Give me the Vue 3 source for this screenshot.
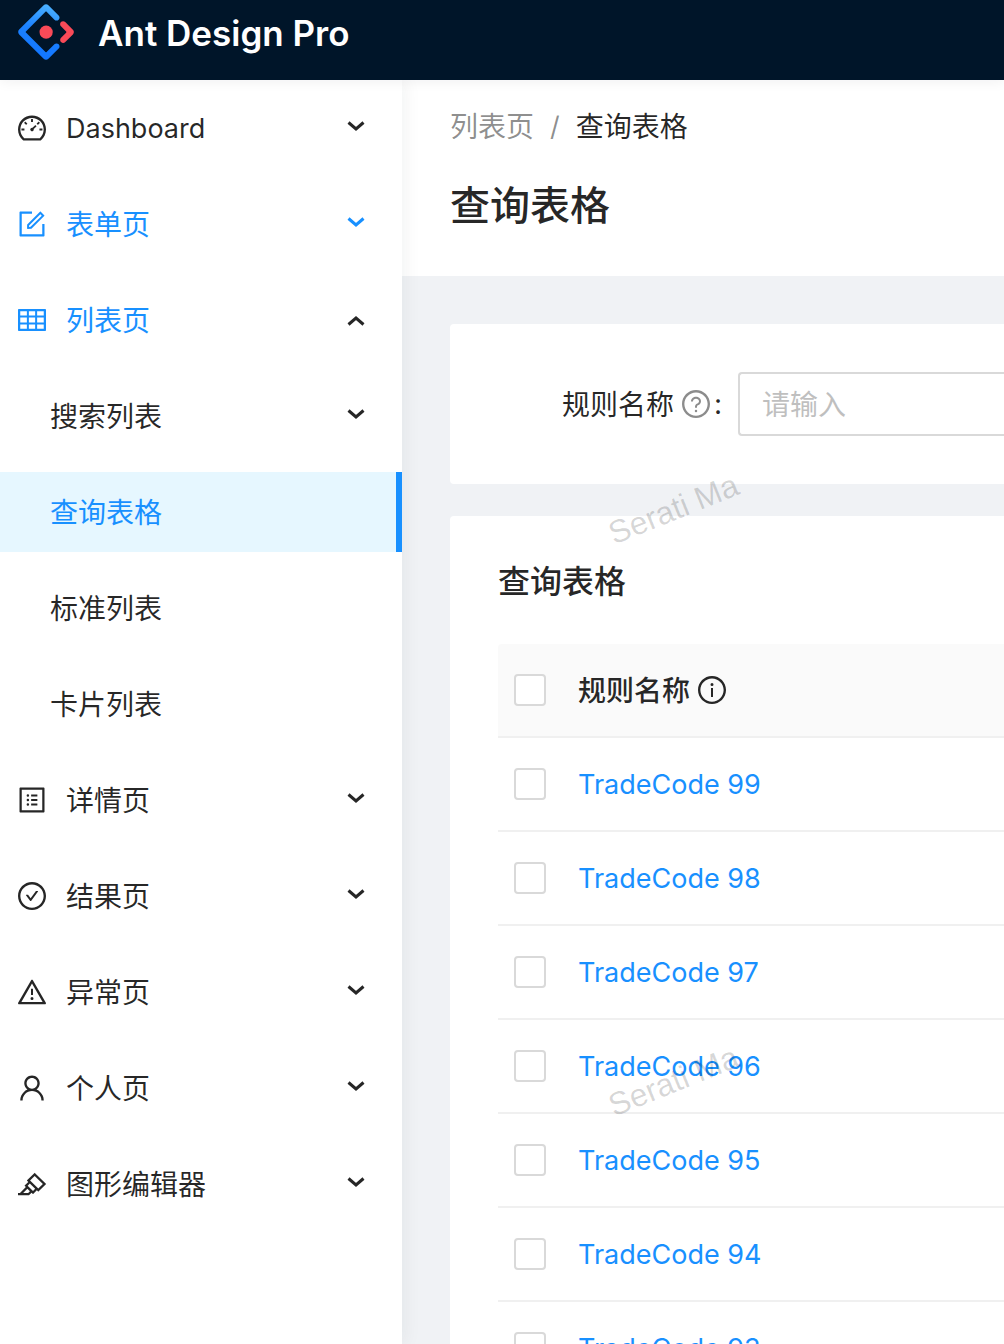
<script setup>
import { ref } from 'vue'

const ring = 'M512 64C264.6 64 64 264.6 64 512s200.6 448 448 448 448-200.6 448-448S759.4 64 512 64zm0 820c-205.4 0-372-166.6-372-372s166.6-372 372-372 372 166.6 372 372-166.6 372-372 372z'

const icons = {
  dashboard: 'M924.8 385.6a446.7 446.7 0 00-96-142.4 446.7 446.7 0 00-142.4-96C631.1 123.8 572.5 112 512 112s-119.1 11.8-174.4 35.2a446.7 446.7 0 00-142.4 96 446.7 446.7 0 00-96 142.4C75.8 440.9 64 499.5 64 560c0 132.7 58.3 257.7 159.9 343.1l1.7 1.4c5.8 4.8 13.1 7.5 20.6 7.5h531.7c7.5 0 14.8-2.7 20.6-7.5l1.7-1.4C901.7 817.7 960 692.7 960 560c0-60.5-11.9-119.1-35.2-174.4zM761.4 836H262.6A371.12 371.12 0 01140 560c0-99.4 38.7-192.8 109-263 70.3-70.3 163.7-109 263-109 99.4 0 192.8 38.7 263 109 70.3 70.3 109 163.7 109 263 0 105.6-44.5 205.5-122.6 276zM623.5 421.5a8.03 8.03 0 00-11.3 0L527.7 506c-18.7-5-39.4-.2-54.1 14.5a55.95 55.95 0 000 79.2 55.95 55.95 0 0079.2 0 55.87 55.87 0 0014.5-54.1l84.5-84.5c3.1-3.1 3.1-8.2 0-11.3l-28.3-28.3zM490 320h44c4.4 0 8-3.6 8-8v-80c0-4.4-3.6-8-8-8h-44c-4.4 0-8 3.6-8 8v80c0 4.4 3.6 8 8 8zm260 218v44c0 4.4 3.6 8 8 8h80c4.4 0 8-3.6 8-8v-44c0-4.4-3.6-8-8-8h-80c-4.4 0-8 3.6-8 8zm12.7-197.2l-31.1-31.1a8.03 8.03 0 00-11.3 0l-56.6 56.6a8.03 8.03 0 000 11.3l31.1 31.1c3.1 3.1 8.2 3.1 11.3 0l56.6-56.6c3.1-3.1 3.1-8.2 0-11.3zm-458.6-31.1a8.03 8.03 0 00-11.3 0l-31.1 31.1a8.03 8.03 0 000 11.3l56.6 56.6c3.1 3.1 8.2 3.1 11.3 0l31.1-31.1c3.1-3.1 3.1-8.2 0-11.3l-56.6-56.6zM262 530h-80c-4.4 0-8 3.6-8 8v44c0 4.4 3.6 8 8 8h80c4.4 0 8-3.6 8-8v-44c0-4.4-3.6-8-8-8z',
  form: 'M904 512h-56c-4.4 0-8 3.6-8 8v320H184V184h320c4.4 0 8-3.6 8-8v-56c0-4.4-3.6-8-8-8H144c-17.7 0-32 14.3-32 32v736c0 17.7 14.3 32 32 32h736c17.7 0 32-14.3 32-32V520c0-4.4-3.6-8-8-8zM355.9 534.9L354 653.8c-.1 8.9 7.1 16.2 16 16.2h.4l118-2.9c2-.1 4-.9 5.4-2.3l415.9-415c3.1-3.1 3.1-8.2 0-11.3L785.4 114.3c-1.6-1.6-3.6-2.3-5.7-2.3s-4.1.8-5.7 2.3l-415.8 415a8.3 8.3 0 00-2.3 5.6zm63.5 23.6L779.7 199l45.2 45.1-360.5 359.7-45.7 1.1.7-46.4z',
  table: 'M928 160H96c-17.7 0-32 14.3-32 32v640c0 17.7 14.3 32 32 32h832c17.7 0 32-14.3 32-32V192c0-17.7-14.3-32-32-32zm-40 208H676V232h212v136zm0 224H676V432h212v160zM412 432h200v160H412V432zm200-64H412V232h200v136zm-476 64h212v160H136V432zm0-200h212v136H136V232zm0 424h212v136H136V656zm276 0h200v136H412V656zm476 136H676V656h212v136z',
  profile: 'M880 112H144c-17.7 0-32 14.3-32 32v736c0 17.7 14.3 32 32 32h736c17.7 0 32-14.3 32-32V144c0-17.7-14.3-32-32-32zm-40 728H184V184h656v656zM492 400h184c4.4 0 8-3.6 8-8v-48c0-4.4-3.6-8-8-8H492c-4.4 0-8 3.6-8 8v48c0 4.4 3.6 8 8 8zm0 144h184c4.4 0 8-3.6 8-8v-48c0-4.4-3.6-8-8-8H492c-4.4 0-8 3.6-8 8v48c0 4.4 3.6 8 8 8zm0 144h184c4.4 0 8-3.6 8-8v-48c0-4.4-3.6-8-8-8H492c-4.4 0-8 3.6-8 8v48c0 4.4 3.6 8 8 8zM340 368a40 40 0 1080 0 40 40 0 10-80 0zm0 144a40 40 0 1080 0 40 40 0 10-80 0zm0 144a40 40 0 1080 0 40 40 0 10-80 0z',
  check: 'M699 353h-46.9c-10.2 0-19.9 4.9-25.9 13.3L469 584.3l-71.2-98.8c-6-8.3-15.6-13.3-25.9-13.3H325c-6.5 0-10.3 7.4-6.5 12.7l124.6 172.8a31.8 31.8 0 0051.7 0l210.6-292c3.9-5.3.1-12.7-6.4-12.7z' + ring,
  warning: 'M464 720a48 48 0 1096 0 48 48 0 10-96 0zm16-304v184c0 4.4 3.6 8 8 8h48c4.4 0 8-3.6 8-8V416c0-4.4-3.6-8-8-8h-48c-4.4 0-8 3.6-8 8zm475.7 440l-416-720c-6.2-10.7-16.9-16-27.7-16s-21.6 5.3-27.7 16l-416 720C56 877.4 71.4 904 96 904h832c24.6 0 40-26.6 27.7-48zm-783.5-27.9L512 239.9l339.8 588.2H172.2z',
  user: 'M858.5 763.6a374 374 0 00-80.6-119.5 375.63 375.63 0 00-119.5-80.6c-.4-.2-.8-.3-1.2-.5C719.5 518 760 444.7 760 362c0-137-111-248-248-248S264 225 264 362c0 82.7 40.5 156 102.8 201.1-.4.2-.8.3-1.2.5-44.8 18.9-85 46-119.5 80.6a375.63 375.63 0 00-80.6 119.5A371.7 371.7 0 00136 901.8a8 8 0 008 8.2h60c4.4 0 7.9-3.5 8-7.8 2-77.2 33-149.5 87.8-204.3 56.7-56.7 132-87.9 212.2-87.9s155.5 31.2 212.2 87.9C779 752.7 810 825 812 902.2c.1 4.4 3.6 7.8 8 7.8h60a8 8 0 008-8.2c-1-47.8-10.9-94.3-29.5-138.2zM512 534c-45.9 0-89.1-17.9-121.6-50.4S340 407.9 340 362c0-45.9 17.9-89.1 50.4-121.6S466.1 190 512 190s89.1 17.9 121.6 50.4S684 316.1 684 362c0 45.9-17.9 89.1-50.4 121.6S557.9 534 512 534z',
  highlight: 'M957.6 507.4L603.2 158.2a7.9 7.9 0 00-11.2 0L353.3 393.4a8.03 8.03 0 00-.1 11.3l.1.1 40 39.4-117.2 115.3a8.03 8.03 0 00-.1 11.3l.1.1 39.5 38.9-189.1 187H72.1c-4.4 0-8.1 3.6-8.1 8V860c0 4.4 3.6 8 8 8h344.9c2.1 0 4.1-.8 5.6-2.3l76.1-75.6 40.4 39.8a7.9 7.9 0 0011.2 0l117.1-115.6 40.1 39.5a7.9 7.9 0 0011.2 0l238.7-235.2c3.4-3 3.4-8 .3-11.2zM389.8 796.2H229.6l134.4-133 80.1 78.9-54.3 54.1zm154.8-62.1L373.2 565.2l68.6-67.6 171.4 168.9-68.6 67.6zM713.1 658L450.3 399.1 597.6 254l262.8 259-147.3 145z',
  question: 'M623.6 316.7C593.6 290.4 554 276 512 276s-81.6 14.5-111.6 40.7C369.2 344 352 380.7 352 420v7.6c0 4.4 3.6 8 8 8h48c4.4 0 8-3.6 8-8V420c0-44.1 43.1-80 96-80s96 35.9 96 80c0 31.1-22 59.6-56.1 72.7-21.2 8.1-39.2 22.3-52.1 40.9-13.1 19-19.9 41.8-19.9 64.9V620c0 4.4 3.6 8 8 8h48c4.4 0 8-3.6 8-8v-22.7a48.3 48.3 0 0130.9-44.8c59-22.7 97.1-74.7 97.1-132.5.1-39.3-17.1-76-48.3-103.3zM472 732a40 40 0 1080 0 40 40 0 10-80 0z' + ring,
  info: 'M464 336a48 48 0 1096 0 48 48 0 10-96 0zm72 112h-48c-4.4 0-8 3.6-8 8v272c0 4.4 3.6 8 8 8h48c4.4 0 8-3.6 8-8V456c0-4.4-3.6-8-8-8z' + ring
}

const menu = [
  { label: 'Dashboard', icon: 'dashboard', latin: true },
  { label: '表单页', icon: 'form', highlighted: true },
  {
    label: '列表页',
    icon: 'table',
    active: true,
    children: [
      { label: '搜索列表', group: true },
      { label: '查询表格', selected: true },
      { label: '标准列表' },
      { label: '卡片列表' }
    ]
  },
  { label: '详情页', icon: 'profile' },
  { label: '结果页', icon: 'check' },
  { label: '异常页', icon: 'warning' },
  { label: '个人页', icon: 'user' },
  { label: '图形编辑器', icon: 'highlight' }
]

const open = ref('列表页')
const toggle = (label) => {
  open.value = open.value === label ? '' : label
}

const ruleName = ref('')
const checked = ref([])
const rows = Array.from({ length: 7 }, (_, i) => `TradeCode ${99 - i}`)
const toggleAll = (event) => {
  checked.value = event.target.checked ? [...rows] : []
}
</script>

<template>
  <div class="layout">
    <header class="topbar">
      <a class="brand" href="#">
        <svg class="logo" viewBox="0 0 200 200" aria-hidden="true">
          <defs>
            <linearGradient id="logo-blue" x1="0.6" y1="0" x2="0.4" y2="0.9">
              <stop offset="0" stop-color="#4ab0ff" />
              <stop offset="0.5" stop-color="#1c82ff" />
              <stop offset="1" stop-color="#1276ff" />
            </linearGradient>
          </defs>
          <path
            fill="url(#logo-blue)"
            d="M91.6 4.2L4.2 91.5c-4.7 4.7-4.7 12.3 0 17l87.4 87.3c4.7 4.7 12.3 4.7 17 0l36.6-36.6c4.2-4.2 4.2-11 0-15.2s-11-4.2-15.2 0l-27.8 27.7c-1.2 1.2-2.9 1.2-4.1 0L28.3 102c-1.2-1.2-1.2-3 0-4.1l69.8-69.8c1.2-1.2 2.9-1.2 4.1 0L130 55.9c4.2 4.2 11 4.2 15.2 0s4.2-11 0-15.2L108.6 4.1c-4.7-4.6-12.3-4.6-17 .1z"
          />
          <path
            fill="#f94a58"
            d="M153.700 135.900c4.200 4.200 11 4.200 15.200 0l27.100-27c4.700-4.700 4.700-12.300 0-17l-27.300-27.200c-4.200-4.200-11-4.200-15.200 0s-4.200 11 0 15.200l18.400 18.400c1.200 1.200 1.200 2.900 0 4.100l-18.200 18.200c-4.200 4.300-4.200 11.100 0 15.300z"
          />
          <circle fill="#f94a58" cx="100.500" cy="100.400" r="23.600" />
        </svg>
        <span class="brand-name">Ant Design Pro</span>
      </a>
    </header>

    <div class="body">
      <nav class="sidebar" aria-label="主菜单">
        <ul class="menu">
          <li v-for="item in menu" :key="item.label">
            <button
              type="button"
              class="menu-item"
              :class="{ highlighted: item.highlighted, active: item.active }"
              :aria-expanded="open === item.label"
              @click="toggle(item.label)"
            >
              <svg class="icon" viewBox="64 64 896 896" aria-hidden="true">
                <path :d="icons[item.icon]" />
              </svg>
              <span class="menu-label" :class="{ latin: item.latin }">{{ item.label }}</span>
              <svg class="arrow" :class="{ up: open === item.label }" viewBox="0 0 20 12" aria-hidden="true">
                <path d="M2.500 2.500L10 9l7.500-6.500" />
              </svg>
            </button>

            <ul v-if="item.children && open === item.label" class="submenu">
              <li v-for="child in item.children" :key="child.label">
                <button v-if="child.group" type="button" class="menu-item nested">
                  <span class="menu-label">{{ child.label }}</span>
                  <svg class="arrow" viewBox="0 0 20 12" aria-hidden="true">
                    <path d="M2.500 2.500L10 9l7.500-6.500" />
                  </svg>
                </button>
                <a v-else href="#" class="menu-item nested" :class="{ selected: child.selected }">
                  <span class="menu-label">{{ child.label }}</span>
                </a>
              </li>
            </ul>
          </li>
        </ul>
      </nav>

      <main class="content">
        <section class="page-header">
          <nav class="breadcrumb" aria-label="面包屑">
            <a href="#">列表页</a>
            <span class="latin">/</span>
            <span class="current">查询表格</span>
          </nav>
          <h1 class="page-title">查询表格</h1>
        </section>

        <div class="cards">
          <form class="card search" @submit.prevent>
            <label class="search-label" for="rule-name">
              <span class="label-text">规则名称</span>
              <svg class="icon muted" viewBox="64 64 896 896" aria-hidden="true">
                <path :d="icons.question" />
              </svg>
              <span class="colon">:</span>
            </label>
            <input id="rule-name" v-model="ruleName" class="search-input" type="text" placeholder="请输入" />
          </form>

          <section class="card list">
            <h2 class="list-title">查询表格</h2>
            <table class="table">
              <thead>
                <tr>
                  <th class="pick">
                    <input
                      type="checkbox"
                      class="checkbox"
                      aria-label="全选"
                      :checked="checked.length === rows.length"
                      @change="toggleAll"
                    />
                  </th>
                  <th>
                    <span class="column-title">
                      <span class="label-text">规则名称</span>
                      <svg class="icon" viewBox="64 64 896 896" aria-hidden="true">
                        <path :d="icons.info" />
                      </svg>
                    </span>
                  </th>
                </tr>
              </thead>
              <tbody>
                <tr v-for="row in rows" :key="row">
                  <td class="pick">
                    <input v-model="checked" type="checkbox" class="checkbox" :value="row" :aria-label="row" />
                  </td>
                  <td><a class="row-link latin" href="#">{{ row }}</a></td>
                </tr>
              </tbody>
            </table>
          </section>
        </div>

        <div class="watermarks" aria-hidden="true">
          <span v-for="n in 2" :key="n" class="watermark">Serati Ma</span>
        </div>
      </main>
    </div>
  </div>
</template>

<style>
body {
  margin: 0;
}
</style>

<style scoped>
.layout {
  --text: rgba(0, 0, 0, 0.85);
  --primary: #1890ff;
  display: flex;
  flex-direction: column;
  height: 100vh;
  overflow: hidden;
  background: #f0f2f5;
  color: var(--text);
  font-family: Inter, 'Noto Sans CJK SC', sans-serif;
  font-size: 28px;
  line-height: 44px;
}

a {
  color: inherit;
  text-decoration: none;
}

ul {
  margin: 0;
  padding: 0;
  list-style: none;
}

button,
input {
  font: inherit;
  color: inherit;
}

.latin {
  font-size: 27px;
}

.icon {
  flex: none;
  width: 28px;
  height: 28px;
  fill: currentColor;
}

.topbar {
  position: relative;
  z-index: 3;
  flex: none;
  height: 80px;
  background: #001529;
  box-shadow: 0 2px 12px rgba(0, 21, 41, 0.06);
}

.brand {
  display: flex;
  align-items: center;
  gap: 24px;
  height: 64px;
  padding-left: 18px;
}

.logo {
  width: 56px;
  height: 56px;
}

.brand-name {
  padding-top: 2px;
  color: #fff;
  font-size: 35px;
  font-weight: 600;
}

.body {
  display: flex;
  flex: 1;
  min-height: 0;
}

.sidebar {
  position: relative;
  z-index: 2;
  flex: 0 0 402px;
  background: #fff;
  box-shadow: 4px 0 16px rgba(29, 35, 41, 0.05);
}

.menu {
  display: flex;
  flex-direction: column;
  gap: 16px;
  padding: 8px 0;
}

.submenu {
  display: flex;
  flex-direction: column;
  gap: 16px;
  margin-top: 16px;
}

.menu-item {
  box-sizing: border-box;
  display: flex;
  align-items: center;
  gap: 20px;
  width: 100%;
  height: 80px;
  padding: 0 36px 0 18px;
  border: 0;
  background: none;
  text-align: left;
  cursor: pointer;
}

.menu-item.nested {
  padding-left: 50px;
}

.menu-label {
  flex: 1;
  padding-top: 2px;
}

.label-text {
  padding-top: 2px;
}

.menu-item.highlighted,
.menu-item.active {
  color: var(--primary);
}

.menu-item.selected {
  border-right: 6px solid var(--primary);
  background: #e6f7ff;
  color: var(--primary);
}

.arrow {
  width: 20px;
  height: 12px;
  margin-bottom: 4px;
  fill: none;
  stroke: currentColor;
  stroke-width: 3;
}

.arrow.up {
  margin: 2px 0 0;
  color: var(--text);
  transform: rotate(180deg);
}

.content {
  position: relative;
  flex: 1;
  min-width: 0;
  overflow-y: auto;
  scrollbar-width: none;
}

.page-header {
  padding: 25px 48px 38px;
  background: #fff;
}

.breadcrumb {
  display: flex;
  gap: 16px;
  color: rgba(0, 0, 0, 0.45);
}

.current {
  color: var(--text);
}

.page-title {
  margin: 25px 0 0;
  font-size: 40px;
  font-weight: 500;
  line-height: 64px;
}

.cards {
  display: flex;
  flex-direction: column;
  gap: 32px;
  padding: 48px 0 48px 48px;
}

.card {
  padding: 48px 0 48px 48px;
  border-radius: 4px 0 0 4px;
  background: #fff;
}

.search {
  display: flex;
}

.search-label {
  display: flex;
  flex: 0 0 240px;
  align-items: center;
  justify-content: flex-end;
  gap: 8px;
}

.muted {
  color: rgba(0, 0, 0, 0.45);
}

.colon {
  margin: 0 16px 0 -4px;
}

.search-input {
  box-sizing: border-box;
  flex: 1;
  min-width: 0;
  height: 64px;
  padding: 2px 22px 0;
  border: 2px solid #d9d9d9;
  border-right: 0;
  border-radius: 4px 0 0 4px;
  outline: 0;
  background: #fff;
}

.search-input::placeholder {
  color: #bfbfbf;
  opacity: 1;
}

.search-input:focus {
  border-color: var(--primary);
}

.list-title {
  margin: -6px 0 38px;
  font-size: 32px;
  font-weight: 500;
  line-height: 48px;
}

.table {
  width: 100%;
  border-collapse: separate;
  border-spacing: 0;
  table-layout: fixed;
}

th,
td {
  box-sizing: border-box;
  height: 94px;
  padding: 0 16px;
  border-bottom: 2px solid #f0f0f0;
  font-weight: 400;
  text-align: left;
}

th {
  background: #fafafa;
  font-weight: 500;
}

th:first-child {
  border-top-left-radius: 4px;
}

.pick {
  width: 64px;
}

.column-title {
  display: flex;
  align-items: center;
  gap: 8px;
}

.checkbox {
  display: block;
  box-sizing: border-box;
  width: 32px;
  height: 32px;
  margin: 0;
  border: 2px solid #d9d9d9;
  border-radius: 4px;
  appearance: none;
  background: #fff;
}

.checkbox:checked {
  border-color: var(--primary);
  background: var(--primary);
}

.row-link {
  color: var(--primary);
}

.watermarks {
  position: absolute;
  top: 407px;
  left: 203px;
  display: flex;
  flex-direction: column;
  gap: 528px;
  pointer-events: none;
}

.watermark {
  color: rgba(0, 0, 0, 0.16);
  font-family: 'Liberation Sans', Arial, sans-serif;
  font-size: 32px;
  transform: rotate(-22deg);
}
</style>
